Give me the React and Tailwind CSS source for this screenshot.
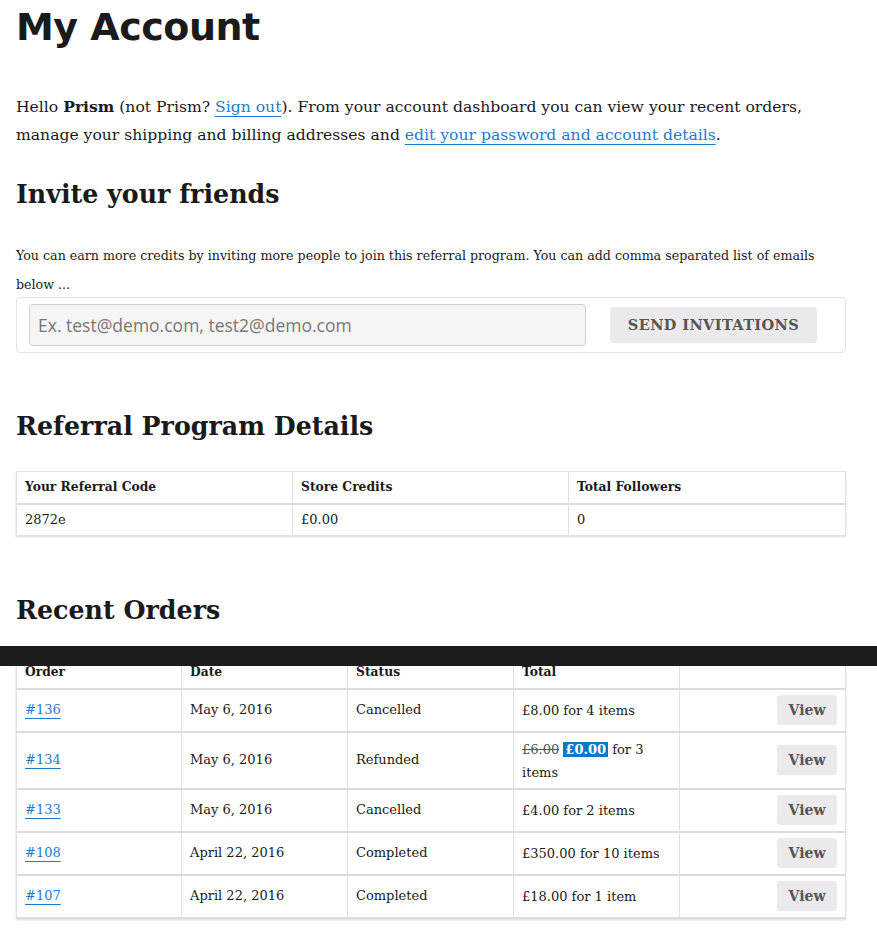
import React from 'react';

const serif = { fontFamily: '"DejaVu Serif", "Liberation Serif", serif' };

const orders = [
  { id: '#136', date: 'May 6, 2016', status: 'Cancelled', total: '£8.00 for 4 items' },
  { id: '#134', date: 'May 6, 2016', status: 'Refunded', refund: true },
  { id: '#133', date: 'May 6, 2016', status: 'Cancelled', total: '£4.00 for 2 items' },
  { id: '#108', date: 'April 22, 2016', status: 'Completed', total: '£350.00 for 10 items' },
  { id: '#107', date: 'April 22, 2016', status: 'Completed', total: '£18.00 for 1 item' },
];

function H2({ children, className = '' }) {
  return (
    <h2 className={`text-[25.3px] font-bold text-[#1a1a1a] leading-[36px] ${className}`} style={serif}>
      {children}
    </h2>
  );
}

export default function App() {
  return (
    <div className="relative min-h-[952px] bg-white text-[#1a1a1a]" style={serif}>
      <div className="absolute left-0 top-[646px] h-[20px] w-full bg-[#1c1c1c]" />

      <div className="ml-4 w-[830px]">
        <h1
          className="pt-[2px] text-[38px] font-bold leading-[50px] tracking-[-0.5px]"
          style={{ fontFamily: '"DejaVu Sans", "Noto Sans", sans-serif' }}
        >
          My Account
        </h1>

        <p className="mt-[41px] text-[15.6px] leading-[28px]">
          Hello <strong>Prism</strong> (not Prism?{' '}
          <a href="#" className="text-[#1e7bd0] underline underline-offset-4 decoration-1">Sign out</a>). From your account
          dashboard you can view your recent orders, manage your shipping and billing addresses and{' '}
          <a href="#" className="text-[#1e7bd0] underline underline-offset-4 decoration-1">edit your password and account details</a>.
        </p>

        <H2 className="mt-[27px]">Invite your friends</H2>

        <p className="mt-[29px] text-[12.65px] leading-[29px]">
          You can earn more credits by inviting more people to join this referral program. You can add comma separated list of emails below ...
        </p>

        <div className="-mt-[2px] flex items-center rounded border border-[#e4e4e4] px-3 py-[6px]">
          <input
            placeholder="Ex. test@demo.com, test2@demo.com"
            className="h-[42px] w-[557px] rounded-sm border border-[#cfcfcf] bg-[#f5f5f5] px-2 text-[17.5px] placeholder:text-[#777]"
            style={{ fontFamily: '"Open Sans", "Noto Sans", sans-serif' }}
          />
          <button className="ml-6 h-[36px] w-[207px] rounded-sm bg-[#ebe9eb] text-[14.5px] font-bold tracking-[0.4px] text-[#555]">
            SEND INVITATIONS
          </button>
        </div>

        <H2 className="mt-[55px]">Referral Program Details</H2>

        <table className="mt-[27px] w-[830px] border-collapse text-[13px] shadow-[0_1px_2px_rgba(0,0,0,0.15)]">
          <thead>
            <tr className="border-b-2 border-[#dcdcdc]">
              <th className="h-[32px] w-[276px] border border-[#e2e2e2] px-2 text-left text-[12.3px] font-bold">Your Referral Code</th>
              <th className="w-[276px] border border-[#e2e2e2] px-2 text-left text-[12.3px] font-bold">Store Credits</th>
              <th className="border border-[#e2e2e2] px-2 text-left text-[12.3px] font-bold">Total Followers</th>
            </tr>
          </thead>
          <tbody>
            <tr>
              <td className="h-[32px] border border-[#e2e2e2] px-2">2872e</td>
              <td className="border border-[#e2e2e2] px-2">£0.00</td>
              <td className="border border-[#e2e2e2] px-2">0</td>
            </tr>
          </tbody>
        </table>

        <H2 className="mt-[56px]">Recent Orders</H2>

        <table className="mt-[28px] w-[830px] border-collapse text-[13px] shadow-[0_1px_2px_rgba(0,0,0,0.15)]">
          <thead>
            <tr className="border-b-2 border-[#dcdcdc]">
              <th className="h-[32px] w-[165px] border border-[#e2e2e2] px-2 text-left text-[12.3px] font-bold">Order</th>
              <th className="w-[166px] border border-[#e2e2e2] px-2 text-left text-[12.3px] font-bold">Date</th>
              <th className="w-[166px] border border-[#e2e2e2] px-2 text-left text-[12.3px] font-bold">Status</th>
              <th className="w-[166px] border border-[#e2e2e2] px-2 text-left text-[12.3px] font-bold">Total</th>
              <th className="border border-[#e2e2e2] px-2"></th>
            </tr>
          </thead>
          <tbody>
            {orders.map((o) => (
              <tr key={o.id} className="border-b-2 border-[#dcdcdc]">
                <td className="h-[43px] border border-[#e2e2e2] px-2">
                  <a href="#" className="text-[#1e7bd0] underline underline-offset-4 decoration-1">{o.id}</a>
                </td>
                <td className="border border-[#e2e2e2] px-2">{o.date}</td>
                <td className="border border-[#e2e2e2] px-2">{o.status}</td>
                <td className="border border-[#e2e2e2] px-2 leading-[23px]">
                  {o.refund ? (
                    <div className="pt-[5px] pb-[4px] pr-4">
                      <del className="text-[#555]">£6.00</del>{' '}
                      <ins className="bg-[#0a78c9] px-[2px] font-bold text-white no-underline">£0.00</ins> for 3 items
                    </div>
                  ) : (
                    o.total
                  )}
                </td>
                <td className="border border-[#e2e2e2] px-2 text-right">
                  <button className="h-[30px] w-[60px] rounded bg-[#ebe9eb] text-[14px] font-bold text-[#555]">View</button>
                </td>
              </tr>
            ))}
          </tbody>
        </table>
      </div>
    </div>
  );
}
